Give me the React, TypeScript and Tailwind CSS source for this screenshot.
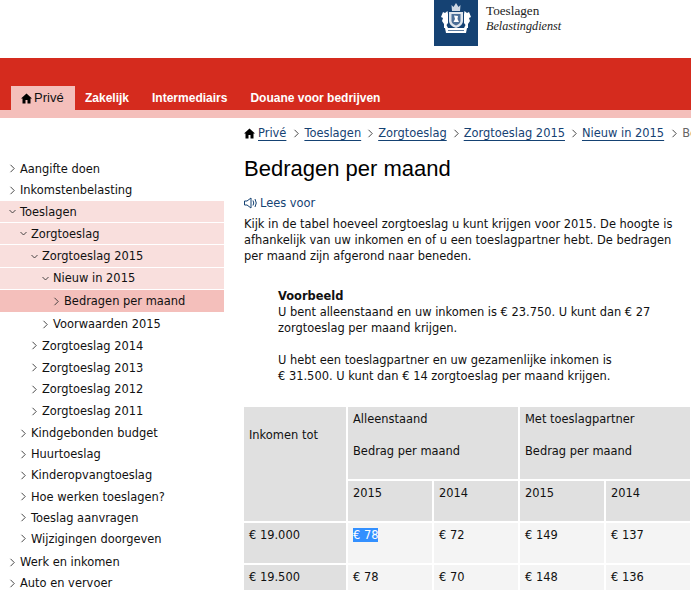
import React from "react";

const Chevron = ({ down = false }: { down?: boolean }) => (
  <svg width="7" height="9" viewBox="0 0 7 9" fill="none" stroke="#333" strokeWidth="0.9" className="shrink-0">
    {down ? <path d="M0.5 3 L3.5 6 L6.5 3" /> : <path d="M1.5 0.8 L5.2 4.5 L1.5 8.2" />}
  </svg>
);

const House = () => (
  <svg width="11" height="11" viewBox="0 0 11 11" fill="#000" className="shrink-0">
    <path d="M5.5 0.5 L11 5.5 L9.5 5.5 L9.5 10.5 L6.5 10.5 L6.5 7 L4.5 7 L4.5 10.5 L1.5 10.5 L1.5 5.5 L0 5.5 Z" />
  </svg>
);

const Crest = () => (
  <svg width="44" height="46" viewBox="0 0 44 46" className="shrink-0 bg-[#154273]">
    <g fill="#fff">
      <path d="M17.500 5 L19.500 7 L22 3 L24.500 7 L26.500 5 L26 11 L18 11 Z" fill="#cfd8e3" />
      <path d="M15 12 L29 12 L29 21 Q29 25.500 22 28 Q15 25.500 15 21 Z" fill="#dfe5ec" />
      <path d="M7 17 L9 12 L11 13 L13.500 11 L14 14 L14 23 L12.500 25 L14 28 L10 28 L10 24 L8 21 L9 18 Z" />
      <path d="M37 17 L35 12 L33 13 L30.500 11 L30 14 L30 23 L31.500 25 L30 28 L34 28 L34 24 L36 21 L35 18 Z" />
      <path d="M11 28 L33 28 L32 33 L12 33 Z" />
    </g>
    <path d="M17.500 14 L26.500 14 L26.500 21 Q26.500 23.500 22 25.500 Q17.500 23.500 17.500 21 Z" fill="#4d6f97" />
    <path d="M20 15.500 L24 16 L23.500 19 L25 22 L19.500 22 L21 19 Z" fill="#fff" />
    <rect x="14" y="30" width="16" height="1" fill="#5c7ca0" />
  </svg>
);

type Item = { label: string; level: number; open?: boolean; state?: "open" | "active"; size: string };
const items: Item[] = [
  { label: "Aangifte doen", level: 0, size: "h-[21.3px]" },
  { label: "Inkomstenbelasting", level: 0, size: "h-[21.3px]" },
  { label: "Toeslagen", level: 0, open: true, state: "open", size: "h-[22.25px]" },
  { label: "Zorgtoeslag", level: 1, open: true, state: "open", size: "h-[22.25px]" },
  { label: "Zorgtoeslag 2015", level: 2, open: true, state: "open", size: "h-[22.25px]" },
  { label: "Nieuw in 2015", level: 3, open: true, state: "open", size: "h-[22.25px]" },
  { label: "Bedragen per maand", level: 4, state: "active", size: "h-[22.25px]" },
  { label: "Voorwaarden 2015", level: 3, size: "h-[21.75px] mt-[1px]" },
  { label: "Zorgtoeslag 2014", level: 2, size: "h-[21.75px]" },
  { label: "Zorgtoeslag 2013", level: 2, size: "h-[21.75px]" },
  { label: "Zorgtoeslag 2012", level: 2, size: "h-[21.75px]" },
  { label: "Zorgtoeslag 2011", level: 2, size: "h-[21.75px]" },
  { label: "Kindgebonden budget", level: 1, size: "h-[21.2px] mt-[0.5px]" },
  { label: "Huurtoeslag", level: 1, size: "h-[21.2px]" },
  { label: "Kinderopvangtoeslag", level: 1, size: "h-[21.2px]" },
  { label: "Hoe werken toeslagen?", level: 1, size: "h-[21.2px]" },
  { label: "Toeslag aanvragen", level: 1, size: "h-[21.2px]" },
  { label: "Wijzigingen doorgeven", level: 1, size: "h-[21.2px]" },
  { label: "Werk en inkomen", level: 0, size: "h-[21.3px] mt-[1.8px]" },
  { label: "Auto en vervoer", level: 0, size: "h-[21.3px]" },
];
const indents = ["pl-[9px]", "pl-[20px]", "pl-[31px]", "pl-[42px]", "pl-[53px]"];

const crumbs = ["Toeslagen", "Zorgtoeslag", "Zorgtoeslag 2015", "Nieuw in 2015"];
const linkClass = "text-[#154273] underline underline-offset-[3px] [text-decoration-skip-ink:none]";

const head = "bg-[#e0e0e0] px-[5px]";
const cell = "bg-[#f4f4f4] px-[5px] pt-[4px] h-[40px]";
const rowHead = "bg-[#e0e0e0] px-[5px] pt-[4px] h-[40px]";

export default function App() {
  return (
    <div className="w-[691px] h-[590px] overflow-hidden bg-white text-[11.45px] leading-[16px] text-[#111] font-['DejaVu_Sans','Verdana',sans-serif]">
      <header className="h-[58px] flex pl-[434px]">
        <Crest />
        <div className="ml-[8px] pt-[3px] text-[#222] font-['Liberation_Serif',serif]">
          <div className="text-[13.2px] leading-[16px]">Toeslagen</div>
          <div className="italic text-[12.2px] leading-[14px]">Belastingdienst</div>
        </div>
      </header>
      <nav className="h-[52px] bg-[#d52b1e] flex items-end pl-[11px] font-['Liberation_Sans',sans-serif] font-bold text-[12px] text-white">
        <div className="h-[24px] w-[64px] bg-[#f4bfbb] flex items-center pl-[10px] gap-[2px] text-[#111] font-normal text-[13px]">
          <House />
          <span>Privé</span>
        </div>
        <div className="h-[24px] flex items-center ml-[10px]">Zakelijk</div>
        <div className="h-[24px] flex items-center ml-[23px]">Intermediairs</div>
        <div className="h-[24px] flex items-center ml-[23px]">Douane voor bedrijven</div>
      </nav>
      <div className="h-[8px] bg-[#f4bfbb]" />
      <div className="flex">
        <aside className="w-[224px] shrink-0 pt-[40.35px]">
          {items.map((it) => (
            <div
              key={it.label}
              className={`${it.size} flex items-center gap-[4px] whitespace-nowrap ${indents[it.level]} ${
                it.state === "open"
                  ? "bg-[#f9dfdd] border-b border-white"
                  : it.state === "active"
                  ? "bg-[#f4bfbb]"
                  : ""
              }`}
            >
              <Chevron down={it.open} />
              <span>{it.label}</span>
            </div>
          ))}
        </aside>
        <main className="ml-[20px] flex-1 min-w-0">
          <div className="mt-[7px] flex items-center whitespace-nowrap h-[16px]">
            <House />
            <a className={`${linkClass} ml-[3px]`}>Privé</a>
            {crumbs.map((c, i) => (
              <React.Fragment key={c}>
                <span className={`${i === 0 ? "ml-[7px]" : "ml-[6px]"} mr-[4px] flex`}><Chevron /></span>
                <a className={linkClass}>{c}</a>
              </React.Fragment>
            ))}
            <span className="ml-[7px] mr-[4px] flex"><Chevron /></span>
            <span className="text-[#666]">Bedragen per maand</span>
          </div>
          <h1 className="mt-[15px] text-[22px] leading-[26px] text-black font-['Liberation_Sans',sans-serif]">
            Bedragen per maand
          </h1>
          <div className="mt-[13px] flex items-center gap-[2px] h-[16px] text-[#154273]">
            <svg width="14" height="12" viewBox="0 0 14 12" fill="none" stroke="#154273" strokeWidth="1">
              <path d="M0.5 4 L3 4 L7 1 L7 11 L3 8 L0.500 8 Z" />
              <path d="M9 3.500 Q10.500 6 9 8.500 M11 2 Q13.500 6 11 10" />
            </svg>
            <span>Lees voor</span>
          </div>
          <p className="mt-[5px] w-[440px]">
            Kijk in de tabel hoeveel zorgtoeslag u kunt krijgen voor 2015. De hoogte is afhankelijk van uw inkomen en of u een toeslagpartner hebt. De bedragen per maand zijn afgerond naar beneden.
          </p>
          <div className="mt-[24px] ml-[34px] w-[390px]">
            <div className="font-bold">Voorbeeld</div>
            <p>U bent alleenstaand en uw inkomen is € 23.750. U kunt dan € 27 zorgtoeslag per maand krijgen.</p>
            <p className="mt-[16px]">U hebt een toeslagpartner en uw gezamenlijke inkomen is<br />€ 31.500. U kunt dan € 14 zorgtoeslag per maand krijgen.</p>
          </div>
          <div className="mt-[23px] w-[446px] grid grid-cols-[102px_84px_84px_84px_84px] gap-[2px]">
            <div className={`${head} row-span-2 pt-[20px]`}>Inkomen tot</div>
            <div className={`${head} col-span-2 h-[72px] pt-[4px]`}>Alleenstaand<br /><br />Bedrag per maand</div>
            <div className={`${head} col-span-2 h-[72px] pt-[4px]`}>Met toeslagpartner<br /><br />Bedrag per maand</div>
            <div className={`${head} h-[40px] pt-[4px]`}>2015</div>
            <div className={`${head} h-[40px] pt-[4px]`}>2014</div>
            <div className={`${head} h-[40px] pt-[4px]`}>2015</div>
            <div className={`${head} h-[40px] pt-[4px]`}>2014</div>
            <div className={rowHead}>€ 19.000</div>
            <div className={cell}><span className="bg-[#3390ff] text-white">€ 78</span></div>
            <div className={cell}>€ 72</div>
            <div className={cell}>€ 149</div>
            <div className={cell}>€ 137</div>
            <div className={rowHead}>€ 19.500</div>
            <div className={cell}>€ 78</div>
            <div className={cell}>€ 70</div>
            <div className={cell}>€ 148</div>
            <div className={cell}>€ 136</div>
          </div>
        </main>
      </div>
    </div>
  );
}
